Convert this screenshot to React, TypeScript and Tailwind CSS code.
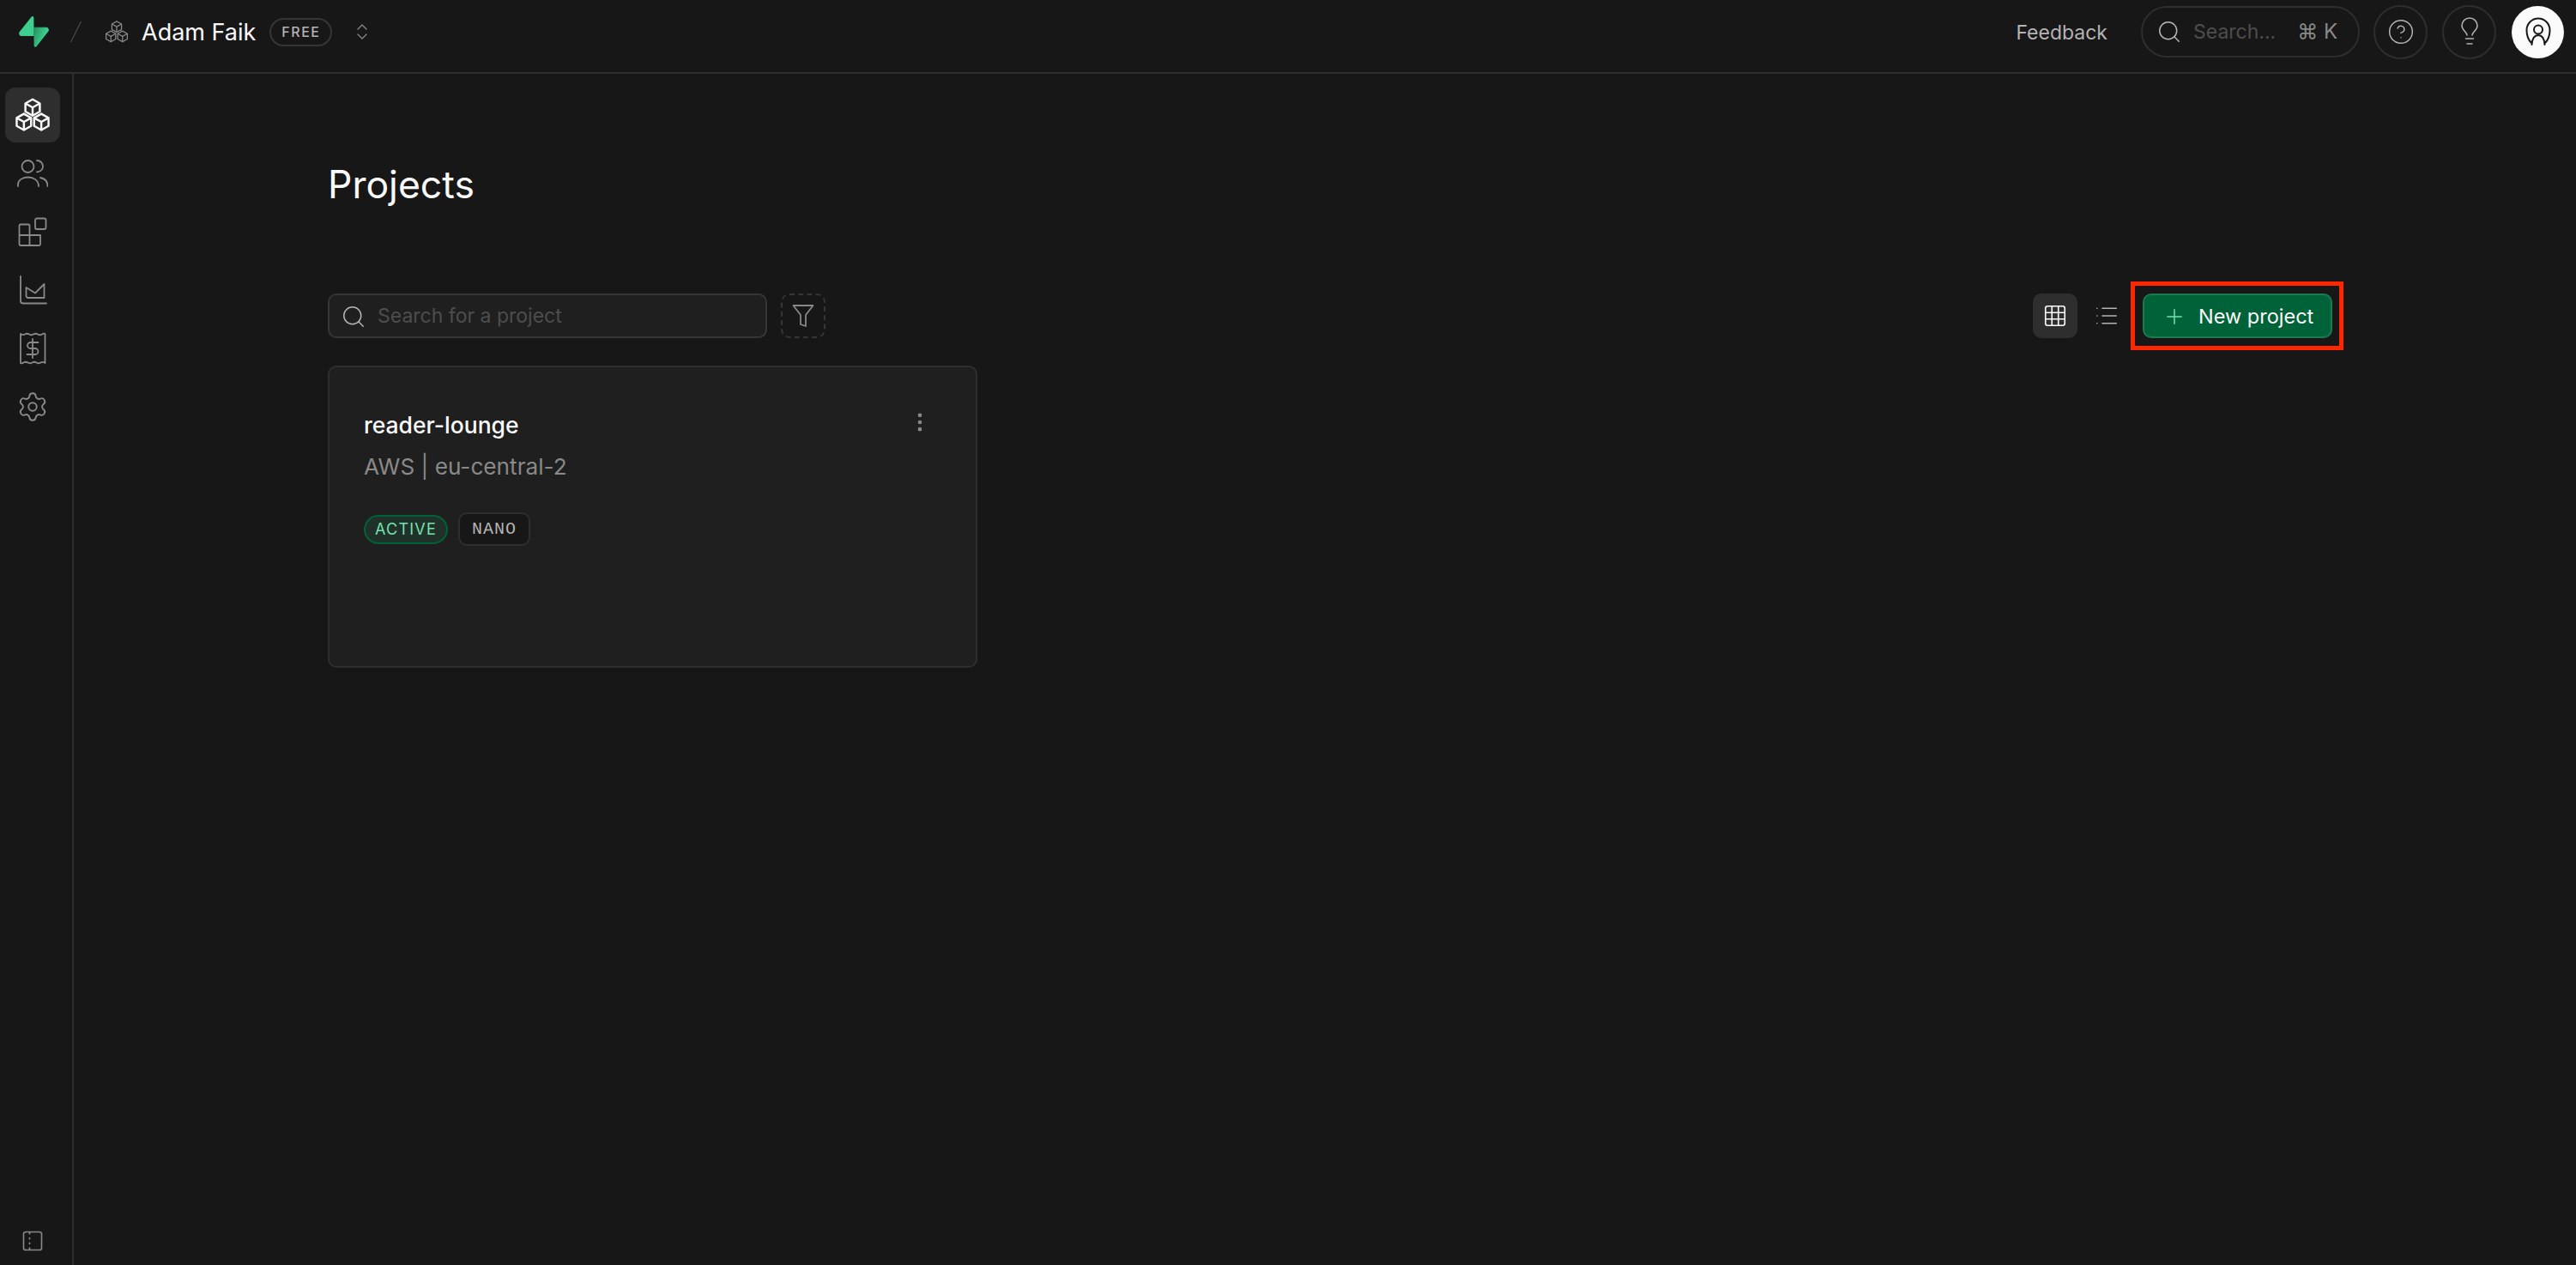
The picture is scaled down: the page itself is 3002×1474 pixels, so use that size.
import React from 'react';
import { ChevronsUpDown, CircleHelp, EllipsisVertical, Grid3x3, List, PanelLeftDashed, Plus, Search, Settings } from 'lucide-react';

function SupabaseLogo() {
  return (
    <svg viewBox="0 0 109 113" className="w-[35px] h-[36px]" fill="none">
      <path d="M63.7076 110.284C60.8481 113.885 55.0502 111.912 54.9813 107.314L53.9738 40.0627L99.1935 40.0627C107.384 40.0627 111.952 49.5228 106.859 55.9374L63.7076 110.284Z" fill="url(#sb-a)" />
      <path d="M45.317 2.07103C48.1765 -1.53037 53.9745 0.442937 54.0434 5.041L54.4849 72.2922H9.83113C1.64038 72.2922 -2.92775 62.8321 2.1655 56.4175L45.317 2.07103Z" fill="#3ECF8E" />
      <defs>
        <linearGradient id="sb-a" x1="53.9738" y1="54.974" x2="94.1635" y2="71.8295" gradientUnits="userSpaceOnUse">
          <stop stopColor="#249361" />
          <stop offset="1" stopColor="#3ECF8E" />
        </linearGradient>
      </defs>
    </svg>
  );
}

function Cubes({ className, width = 1.2 }: { className: string; width?: number }) {
  const centers = [
    [12, 7],
    [6.2, 16.6],
    [17.8, 16.6],
  ];
  return (
    <svg viewBox="0 0 24 24" className={className} fill="none" stroke="currentColor" strokeWidth={width} strokeLinejoin="round">
      {centers.map(([x, y]) => (
        <g key={`${x}-${y}`} transform={`translate(${x} ${y})`}>
          <path d="M0 -5.4L4.8 -2.7V2.7L0 5.4L-4.8 2.7V-2.7Z" />
          <path d="M-4.8 -2.7L0 0L4.8 -2.7M0 0V5.4" />
        </g>
      ))}
    </svg>
  );
}

function UsersIcon() {
  return (
    <svg viewBox="0 0 36 36" className="w-[36px] h-[36px]" fill="none" stroke="currentColor" strokeWidth="1.8" strokeLinecap="round">
      <circle cx="12.5" cy="10" r="7" />
      <path d="M23 3C27 3 30 6 30 10C30 13.5 27 16 23 16.5" />
      <path d="M1 33V31C1 26 6 22.5 12.5 22.5C19 22.5 25 26 25 33" />
      <path d="M27 23C32 24 35.5 27 35.5 33" />
    </svg>
  );
}

function ProductsIcon() {
  return (
    <svg viewBox="0 0 36 36" className="w-[36px] h-[36px]" fill="none" stroke="currentColor" strokeWidth="1.8" strokeLinejoin="round">
      <path d="M4 9.5H13A1.5 1.5 0 0 1 14.5 11V22H27V32.5A1.5 1.5 0 0 1 25.5 34H4A1.5 1.5 0 0 1 2.5 32.5V11A1.5 1.5 0 0 1 4 9.5Z" />
      <path d="M2.5 22H14.5V34" />
      <rect x="21" y="2.5" width="12.5" height="12.5" rx="2" />
    </svg>
  );
}

function ReportsIcon() {
  return (
    <svg viewBox="0 0 36 36" className="w-[36px] h-[36px]" fill="none" stroke="currentColor" strokeWidth="1.8" strokeLinejoin="round" strokeLinecap="round">
      <path d="M4 2V30.5A3 3 0 0 0 7 33.5H34" />
      <path d="M10.5 15L21 21.5L31.5 11V27H13A2.5 2.5 0 0 1 10.5 24.5Z" />
    </svg>
  );
}

function BillingIcon() {
  return (
    <svg viewBox="0 0 36 38" className="w-[36px] h-[38px]" fill="none" stroke="currentColor" strokeWidth="1.8" strokeLinejoin="round" strokeLinecap="round">
      <path d="M4 2Q6.5 4 9 2.5T14 2.5T19 2.5T24 2.5T29 2.5T32.5 2V36Q30 34 27.5 35.5T22.5 35.5T17.5 35.5T12.5 35.5T7.5 35.5T4 36Z" />
      <path d="M24.5 12H15.5A3.5 3.5 0 0 0 15.5 19H21A3.5 3.5 0 0 1 21 26H11.5M18 8V30" />
    </svg>
  );
}

function FunnelIcon() {
  return (
    <svg viewBox="0 0 26 28" className="w-[26px] h-[28px]" fill="none" stroke="currentColor" strokeWidth="1.8" strokeLinejoin="round">
      <path d="M1.5 2H24.5L16 13V26L10 24V13Z" />
    </svg>
  );
}

function BulbIcon() {
  return (
    <svg viewBox="0 0 24 34" className="w-[24px] h-[34px]" fill="none" stroke="currentColor" strokeWidth="1.5" strokeLinecap="round">
      <path d="M9 21C8.5 17 3 15 3 10A9 9 0 0 1 21 10C21 15 15.5 17 15 21" />
      <path d="M7.5 25H16.5M9 31H15" />
    </svg>
  );
}

function AvatarIcon() {
  return (
    <svg viewBox="0 0 30 36" className="w-[30px] h-[36px]" fill="none" stroke="#171717" strokeWidth="2" strokeLinecap="round">
      <path d="M7 31C2 26 1.5 21 1.5 16A13.5 13.5 0 0 1 28.5 16C28.5 21 28 26 23 31" />
      <circle cx="15" cy="15.5" r="5" />
      <path d="M7.5 33C8 26 11 22 15 22C19 22 22 26 22.5 33" />
    </svg>
  );
}

const navItems = [
  <Cubes key="projects" className="w-[42px] h-[42px] text-[#fafafa]" width={1.4} />,
  <UsersIcon key="team" />,
  <ProductsIcon key="products" />,
  <ReportsIcon key="reports" />,
  <BillingIcon key="billing" />,
  <Settings key="settings" size={38} strokeWidth={1.2} />,
];

function TopBar() {
  return (
    <header className="h-[86px] shrink-0 flex items-center border-b-2 border-[#2e2e2e] pl-[22px] pr-[14px] pb-[10px]">
      <SupabaseLogo />
      <span className="ml-[25px] w-[13px] h-[24px] flex items-center">
        <svg viewBox="0 0 13 24" className="w-[13px] h-[24px]" fill="none" stroke="#4d4d4d" strokeWidth="1.2">
          <path d="M12.5 0L0.5 24" />
        </svg>
      </span>
      <span className="ml-[27px] text-[#898989]">
        <Cubes className="w-[28px] h-[28px]" width={1.1} />
      </span>
      <span className="ml-[15px] text-[27px] leading-none text-[#fafafa]">Adam Faik</span>
      <span className="ml-[16px] w-[73px] h-[33px] flex items-center justify-center rounded-full border-2 border-[#363636] text-[16px] font-medium tracking-[1.5px] text-[#b4b4b4]">
        FREE
      </span>
      <ChevronsUpDown size={24} strokeWidth={1.3} className="ml-[23px] text-[#898989]" />
      <span className="ml-auto mt-[2px] text-[23px] leading-none text-[#b4b4b4]">Feedback</span>
      <div className="ml-[39px] w-[255px] h-[60px] flex items-center rounded-full border-2 border-[#2e2e2e] pl-[16px]">
        <Search size={30} strokeWidth={1.2} className="text-[#b4b4b4]" />
        <span className="ml-[13px] text-[23px] leading-none text-[#4d4d4d]">Search...</span>
        <span className="ml-[25px] text-[24px] leading-none text-[#898989]">⌘ K</span>
      </div>
      <div className="ml-[16px] w-[63px] h-[63px] flex items-center justify-center rounded-full border-2 border-[#2e2e2e] text-[#b4b4b4]">
        <CircleHelp size={32} strokeWidth={1.1} />
      </div>
      <div className="ml-[17px] w-[63px] h-[63px] flex items-center justify-center rounded-full border-2 border-[#2e2e2e] text-[#b4b4b4]">
        <BulbIcon />
      </div>
      <div className="ml-[18px] w-[61px] h-[61px] flex items-center justify-center rounded-full bg-[#fafafa]">
        <AvatarIcon />
      </div>
    </header>
  );
}

function SideBar() {
  return (
    <aside className="w-[86px] shrink-0 flex flex-col items-start border-r-2 border-[#2e2e2e] pl-[6px] pt-[16px] pb-[14px]">
      <nav className="flex flex-col gap-[4px]">
        {navItems.map((icon, i) => (
          <div
            key={i}
            className={i === 0 ? 'w-[64px] h-[64px] flex items-center justify-center rounded-[12px] bg-[#2e2e2e]' : 'w-[64px] h-[64px] flex items-center justify-center text-[#898989]'}
          >
            {icon}
          </div>
        ))}
      </nav>
      <div className="mt-auto w-[64px] flex justify-center text-[#898989]">
        <PanelLeftDashed size={28} strokeWidth={1.4} />
      </div>
    </aside>
  );
}

function ProjectCard() {
  return (
    <div className="w-[757px] h-[352px] rounded-[10px] border-2 border-[#2e2e2e] bg-[#1f1f1f] pt-[49px] pl-[40px] pr-[50px]">
      <div className="flex items-start justify-between">
        <div>
          <div className="text-[26.5px] leading-[36px] font-medium text-[#fafafa]">reader-lounge</div>
          <div className="mt-[13px] text-[26.2px] leading-[36px] text-[#898989]">AWS | eu-central-2</div>
        </div>
        <EllipsisVertical size={28} strokeWidth={2} className="text-[#898989] mr-[1px] mt-[1px]" />
      </div>
      <div className="mt-[35px] flex items-center gap-[12px]">
        <span className="h-[34px] w-[98px] flex items-center justify-center rounded-full border-2 border-[#006239] bg-[#20312a] text-[18px] tracking-[1.2px] text-[#72e3ad]">
          ACTIVE
        </span>
        <span className="h-[39px] w-[84px] flex items-center justify-center rounded-[10px] border-2 border-[#2e2e2e] bg-[#171717] font-['Liberation_Mono',monospace] text-[20px] tracking-[1px] text-[#b4b4b4]">
          NANO
        </span>
      </div>
    </div>
  );
}

function Toolbar() {
  return (
    <div className="flex items-center">
      <div className="w-[512px] h-[52px] flex items-center rounded-[10px] border-2 border-[#363636] bg-[#1f1f1f] pl-[13px] pt-[1px]">
        <Search size={30} strokeWidth={1.2} className="text-[#b4b4b4]" />
        <span className="ml-[13px] text-[23px] leading-none text-[#4d4d4d]">Search for a project</span>
      </div>
      <div className="ml-[16px] w-[52px] h-[52px] flex items-center justify-center rounded-[10px] border-2 border-dashed border-[#363636] text-[#898989]">
        <FunnelIcon />
      </div>
      <div className="ml-auto w-[52px] h-[52px] flex items-center justify-center rounded-[10px] bg-[#2e2e2e] text-[#fafafa]">
        <Grid3x3 size={30} strokeWidth={1.3} />
      </div>
      <div className="ml-[8px] w-[52px] h-[52px] flex items-center justify-center text-[#b4b4b4]">
        <List size={30} strokeWidth={1.3} />
      </div>
      <div className="relative ml-[16px]">
        <button className="w-[221px] h-[52px] flex items-center rounded-[10px] border-2 border-[#1d7a4f] bg-[#006239] pl-[21px] pt-[1px] text-[23.5px] leading-none text-[#fafafa]">
          <Plus size={28} strokeWidth={1.3} className="text-[#72e3ad]" />
          <span className="ml-[14px]">New project</span>
        </button>
        <div className="absolute -left-[14px] -right-[13px] -top-[14px] -bottom-[14px] border-[5px] border-[#ff2600]" />
      </div>
    </div>
  );
}

export default function App() {
  return (
    <div className="h-screen flex flex-col bg-[#171717] font-['Inter',sans-serif] overflow-hidden">
      <TopBar />
      <div className="flex flex-1 min-h-0">
        <SideBar />
        <main className="flex-1 pl-[296px] pr-[284px]">
          <h1 className="mt-[101px] text-[44.5px] leading-[56px] text-[#fafafa]">Projects</h1>
          <div className="mt-[99px]">
            <Toolbar />
          </div>
          <div className="mt-[32px]">
            <ProjectCard />
          </div>
        </main>
      </div>
    </div>
  );
}
